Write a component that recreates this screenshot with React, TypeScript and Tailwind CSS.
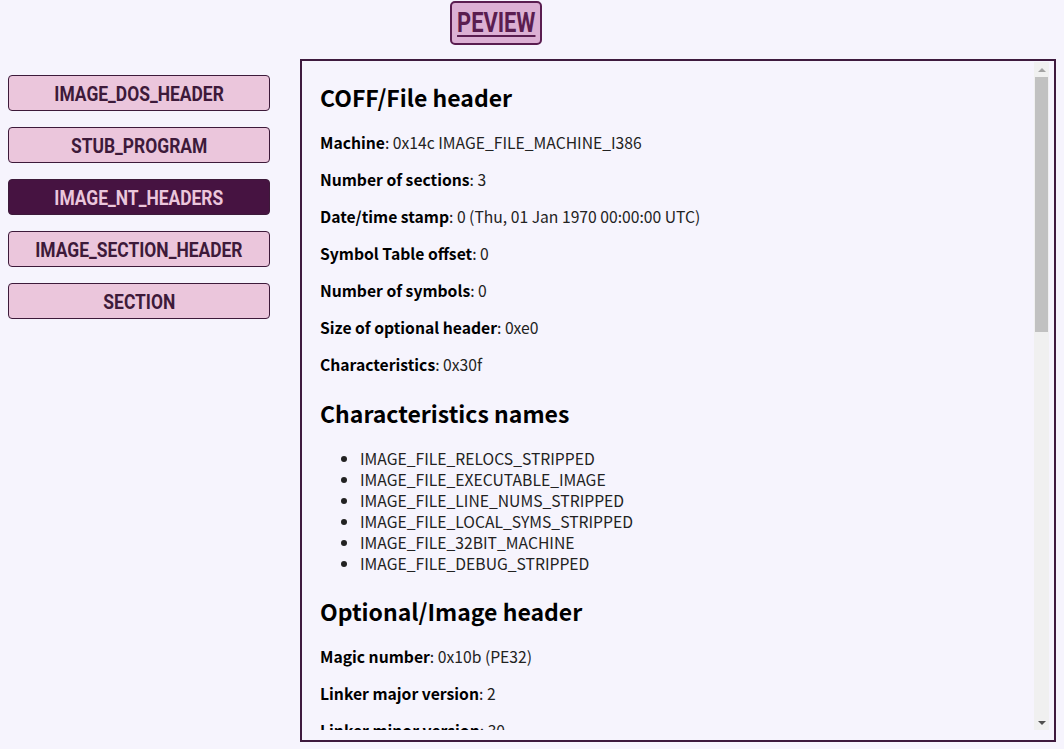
const navItems = [
  { label: 'IMAGE_DOS_HEADER', active: false },
  { label: 'STUB_PROGRAM', active: false },
  { label: 'IMAGE_NT_HEADERS', active: true },
  { label: 'IMAGE_SECTION_HEADER', active: false },
  { label: 'SECTION', active: false },
];

const coffFields: [string, string][] = [
  ['Machine', '0x14c IMAGE_FILE_MACHINE_I386'],
  ['Number of sections', '3'],
  ['Date/time stamp', '0 (Thu, 01 Jan 1970 00:00:00 UTC)'],
  ['Symbol Table offset', '0'],
  ['Number of symbols', '0'],
  ['Size of optional header', '0xe0'],
  ['Characteristics', '0x30f'],
];

const charNames = [
  'IMAGE_FILE_RELOCS_STRIPPED',
  'IMAGE_FILE_EXECUTABLE_IMAGE',
  'IMAGE_FILE_LINE_NUMS_STRIPPED',
  'IMAGE_FILE_LOCAL_SYMS_STRIPPED',
  'IMAGE_FILE_32BIT_MACHINE',
  'IMAGE_FILE_DEBUG_STRIPPED',
];

const optionalFields: [string, string][] = [
  ['Magic number', '0x10b (PE32)'],
  ['Linker major version', '2'],
  ['Linker minor version', '30'],
  ['Size of code', '0x200'],
  ['Size of initialized data', '0x400'],
  ['Size of uninitialized data', '0'],
  ['Address of entry point', '0x1000'],
  ['Base of code', '0x1000'],
  ['Base of data', '0x2000'],
  ['Image base', '0x400000'],
  ['Section alignment', '0x1000'],
  ['File alignment', '0x200'],
];

const condensed = "font-['Roboto',sans-serif] font-bold";

function Field({ name, value }: { name: string; value: string }) {
  return (
    <p className="my-[15px] leading-[22px]">
      <b className="font-bold text-black">{name}</b>: {value}
    </p>
  );
}

function Heading({ children, first }: { children: string; first?: boolean }) {
  return (
    <h2
      className={`${first ? 'mt-[19px]' : 'mt-[22px]'} mb-[20px] text-[23px] font-bold leading-[30px] text-black`}
    >
      {children}
    </h2>
  );
}

function ScrollBar() {
  return (
    <div className="flex w-[15px] shrink-0 flex-col bg-[#f0f0f0]">
      <div className="flex h-[15px] items-center justify-center">
        <span className="h-0 w-0 border-x-[4px] border-b-[4px] border-x-transparent border-b-[#a3a3a3]" />
      </div>
      <div className="mx-[1px] h-[255px] bg-[#c1c1c1]" />
      <div className="flex-1" />
      <div className="flex h-[15px] items-center justify-center">
        <span className="h-0 w-0 border-x-[4px] border-t-[4px] border-x-transparent border-t-[#505050]" />
      </div>
    </div>
  );
}

export default function App() {
  return (
    <div className="min-h-screen bg-[#f6f4fd] font-['Noto_Sans_CJK_KR','Noto_Sans',sans-serif] text-[15.7px] text-[#222]">
      {/* Header */}
      <div className="pl-[450px] pt-[1px]">
        <button
          className={`${condensed} flex h-[44px] w-[92px] items-center justify-center rounded-[5px] border-2 border-[#5a1d50] bg-[#dcb0d4] text-[#5a1d50]`}
        >
          <span className="inline-block scale-x-[0.78] whitespace-nowrap text-[28px] leading-none underline decoration-2 underline-offset-[3px]">
            PEVIEW
          </span>
        </button>
      </div>

      <div className="mt-[14px] flex items-start pl-[8px]">
        {/* Sidebar */}
        <nav className="mt-[16px] flex w-[262px] flex-col gap-[16px]">
          {navItems.map((item) => (
            <button
              key={item.label}
              className={`${condensed} flex h-[36px] items-center justify-center rounded-[4px] border border-[#3d1a3a] pt-[2px] ${
                item.active ? 'bg-[#461341] text-[#ebc6dc]' : 'bg-[#ebc6dc] text-[#3d1a3a]'
              }`}
            >
              <span className="inline-block scale-x-[0.83] whitespace-nowrap text-[21px] leading-none">
                {item.label}
              </span>
            </button>
          ))}
        </nav>

        {/* Content panel */}
        <section className="ml-[30px] flex h-[683px] w-[756px] border-2 border-[#3e1a3e] pt-[1px] pr-[5px] pb-[10px]">
          <div className="min-w-0 flex-1 overflow-hidden pl-[18px]">
            <div className="pt-[1px]">
              <Heading first>COFF/File header</Heading>
              {coffFields.map(([n, v]) => (
                <Field key={n} name={n} value={v} />
              ))}
              <Heading>Characteristics names</Heading>
              <ul className="list-disc pl-10 leading-[21px]">
                {charNames.map((c) => (
                  <li key={c}>{c}</li>
                ))}
              </ul>
              <Heading>Optional/Image header</Heading>
              {optionalFields.map(([n, v]) => (
                <Field key={n} name={n} value={v} />
              ))}
            </div>
          </div>
          <ScrollBar />
        </section>
      </div>
    </div>
  );
}
